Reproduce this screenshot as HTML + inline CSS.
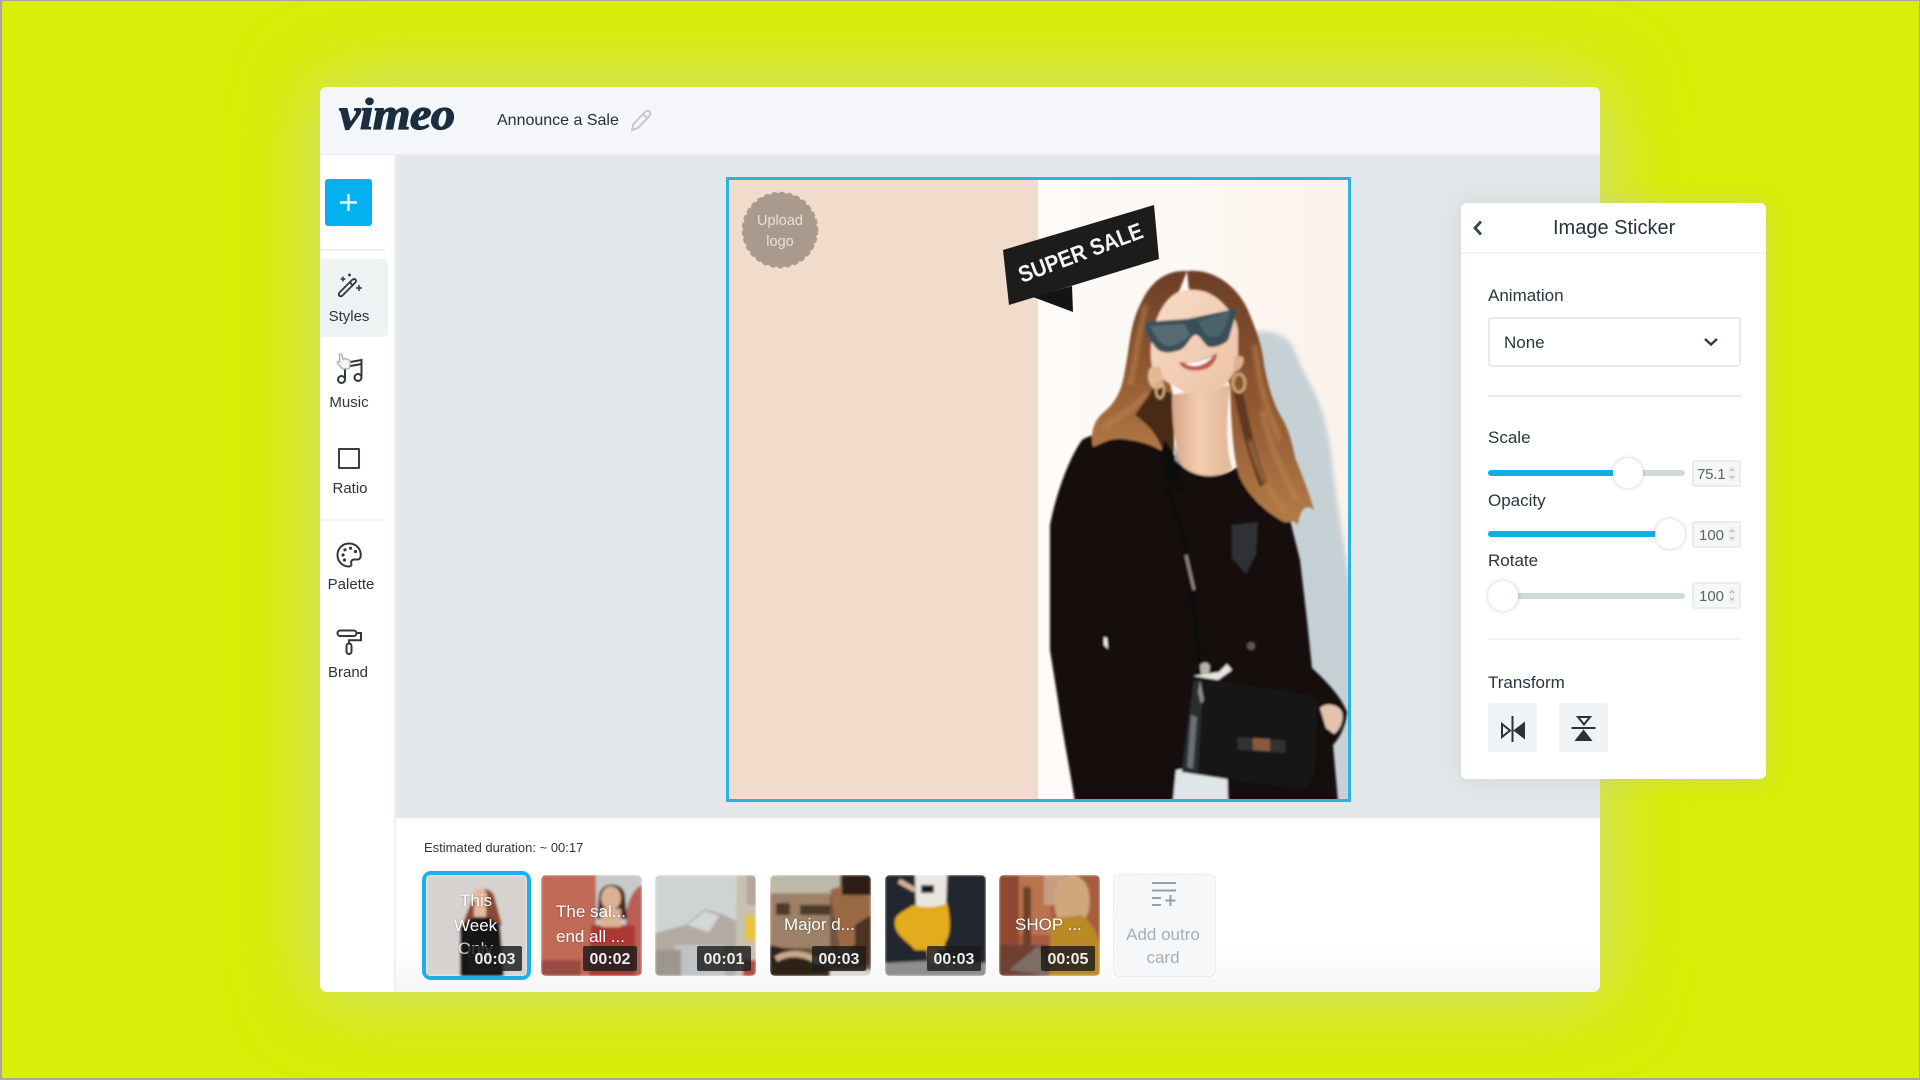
<!DOCTYPE html>
<html><head><meta charset="utf-8"><title>Vimeo</title>
<style>
*{box-sizing:border-box;margin:0;padding:0}
html,body{width:1920px;height:1080px;overflow:hidden}
body{position:relative;background:#d9ee08;font-family:"Liberation Sans",sans-serif;color:#2a3540}
.frame{position:absolute;inset:0;border:2px solid #a8a8a0;border-width:1px 1px 2px 2px;z-index:50;pointer-events:none}
.a{position:absolute}
.win{left:320px;top:87px;width:1280px;height:905px;border-radius:7px;box-shadow:0 0 75px 6px rgba(212,212,200,.62);overflow:hidden;background:#fff}
.side{left:320px;top:155px;width:76px;height:837px;background:#fff;border-right:2px solid #eef0f1}
.stage{left:396px;top:155px;width:1204px;height:663px;background:#e2e8e9}
.bot{left:396px;top:818px;width:1204px;height:174px;background:linear-gradient(#fff 0,#fff 130px,#f6f6f6 174px);border-bottom-right-radius:7px}
.lbl{position:absolute;font-size:15px;line-height:18px;text-align:center;width:76px;color:#2b3640;white-space:nowrap}
.t{position:absolute;white-space:nowrap}
.plab{position:absolute;left:1488px;font-size:17px;line-height:20px;color:#2a3540;white-space:nowrap}
.track{position:absolute;left:1488px;width:197px;height:6px;border-radius:3px;background:#d0d9dc}
.fill{position:absolute;left:0;top:0;height:6px;border-radius:3px;background:#12aee6}
.knob{position:absolute;width:30px;height:30px;border-radius:50%;background:#fff;box-shadow:0 0 4px rgba(0,0,0,.22)}
.num{position:absolute;left:1692px;width:49px;height:27px;background:#f6f8f8;border:2px solid #eaedee;border-radius:3px;font-size:15px;line-height:25px;color:#5a636a;padding-left:3px}
.num svg{position:absolute;right:3px;top:3px}
.btn{position:absolute;top:703px;width:49px;height:49px;background:#f0f3f5;border-radius:3px}
.th{position:absolute;top:875px;width:101px;height:101px;border-radius:5px;overflow:hidden}
.th svg{position:absolute;left:0;top:0}
.cap{position:absolute;color:#fff;font-size:17px;line-height:25px;text-shadow:0 0 2px rgba(0,0,0,.35);white-space:nowrap}
.dur{position:absolute;right:5px;bottom:5px;width:54px;height:25px;background:rgba(28,28,28,.82);border-radius:2px;color:#ececec;font-size:16px;line-height:27px;text-align:center;font-weight:bold}
</style></head>
<body>
<div class="a win"></div>
<div class="a" style="left:320px;top:87px;width:1280px;height:68px;background:#f5f6f9;border-radius:7px 7px 0 0;border-bottom:1px solid #eceef0"></div>
<div class="t" style="left:339px;top:85px;font:italic bold 44px/60px 'Liberation Serif',serif;color:#1a2e3f;-webkit-text-stroke:1.2px #1a2e3f;letter-spacing:-.5px;transform:scaleX(1.1);transform-origin:left center">vimeo</div>
<div class="t" style="left:497px;top:111px;font-size:16px;line-height:20px;color:#26313b">Announce a Sale</div>
<svg class="a" style="left:629px;top:108px" width="24" height="24" viewBox="0 0 24 24" fill="none" stroke="#c3c9cc" stroke-width="2" stroke-linejoin="round"><path d="M3 22l1.500-6L16 4c1.500-1.600 3.300-1.600 4.500-.4s1.200 3-.3 4.500L9 20z"/><path d="M14 6l5 5"/></svg>

<div class="a side" style="border-bottom-left-radius:7px"></div>
<div class="a stage"></div>
<div class="a bot"></div>

<div class="a" style="left:325px;top:179px;width:47px;height:47px;background:#04b0f0;border-radius:3px"></div>
<svg class="a" style="left:325px;top:179px" width="47" height="47"><path d="M23.500 15v17M15 23.500h17" stroke="#e8f8ff" stroke-width="2.400"/></svg>
<div class="a" style="left:320px;top:249px;width:66px;height:2px;background:#eef0f1"></div>
<div class="a" style="left:320px;top:259px;width:68px;height:78px;background:#eff2f3;border-radius:0 5px 5px 0"></div>
<div class="a" style="left:320px;top:519px;width:66px;height:2px;background:#eef0f1"></div>

<svg class="a" style="left:335px;top:272px" width="30" height="30" viewBox="0 0 30 30" fill="none" stroke="#30373d" stroke-width="1.800"><path d="M4.500 20.500L17 8c1.300-1.200 3-1.200 3.600-.4s.5 2.200-.7 3.400L7.500 23.500c-1.200 1-2.600 1-3.200.2s-.6-2.200.2-3.200z"/><path d="M15 10.500l3 3"/><path d="M8 4.500v5M5.500 7h5M14.500 1.500v3M13 3h3M24 13v6M21 16h6" stroke-width="1.500"/></svg>
<div class="lbl" style="left:311px;top:308px">Styles</div>

<svg class="a" style="left:331px;top:350px" width="36" height="36" viewBox="0 0 36 36" fill="none" stroke="#30373d" stroke-width="2"><circle cx="10.500" cy="29.500" r="3.500"/><circle cx="27" cy="27.500" r="3.500"/><path d="M14 29V13l16.500-3v17.500"/><path d="M14 17l16.500-3"/><path d="M8.500 4.500c.8-1 2-.7 2.300.3l1.200 4.200 1.600-.3c2.400 0 5.400 1 5.700 3.200l-.6 5c-.3 1.300-1.300 2-2.500 2h-4.500l-5-5.300c-.8-1-.5-2 .6-2.200l1.300.5z" fill="#f4f4f4" stroke="#a9adb0" stroke-width="1.300"/></svg>
<div class="lbl" style="left:311px;top:394px">Music</div>

<div class="a" style="left:338px;top:448px;width:22px;height:21px;border:2.500px solid #3a4046;border-radius:1px"></div>
<div class="lbl" style="left:312px;top:480px">Ratio</div>

<svg class="a" style="left:335px;top:541px" width="28" height="28" viewBox="0 0 28 28" fill="none" stroke="#30373d" stroke-width="2"><path d="M14 2.500C7.500 2.500 2.500 7.500 2.500 14S7.500 25.500 14 25.500c2 0 2.800-1.300 2.300-2.800-.7-2 .3-4.200 2.700-4.200h3.300c2.300 0 3.500-1.800 3.500-4.300C25.800 7.200 20.500 2.500 14 2.500z"/><g fill="#30373d" stroke="none"><circle cx="8" cy="14" r="1.600"/><circle cx="10" cy="8.800" r="1.600"/><circle cx="15.500" cy="7.200" r="1.600"/><circle cx="20.500" cy="10.500" r="1.600"/><circle cx="9.500" cy="19" r="1.600"/></g></svg>
<div class="lbl" style="left:313px;top:576px">Palette</div>

<svg class="a" style="left:335px;top:628px" width="28" height="28" viewBox="0 0 28 28" fill="none" stroke="#30373d" stroke-width="2"><rect x="2.500" y="2.500" width="19" height="5.500" rx="2.700"/><path d="M21.500 5h4.500v7.200H14v3"/><rect x="11.500" y="15.500" width="5" height="10.500" rx="2.500"/></svg>
<div class="lbl" style="left:310px;top:664px">Brand</div>

<!-- canvas -->
<svg class="a" style="left:726px;top:177px" width="625" height="625" viewBox="726 177 625 625">
<defs>
<linearGradient id="wall" x1="0" x2="1" y1="0" y2="0"><stop offset="0" stop-color="#fdfbf8"/><stop offset=".55" stop-color="#fcf7f2"/><stop offset="1" stop-color="#fbf2ea"/></linearGradient>
<linearGradient id="hr" x1="0" x2="0" y1="0" y2="1"><stop offset="0" stop-color="#6b3f26"/><stop offset=".5" stop-color="#8e5630"/><stop offset="1" stop-color="#b47c48"/></linearGradient>
<linearGradient id="skin" x1="0" x2="1" y1="0" y2="1"><stop offset="0" stop-color="#f8dcc7"/><stop offset="1" stop-color="#ecc2a4"/></linearGradient>
<linearGradient id="nk" x1="0" x2="1" y1="0" y2="0"><stop offset="0" stop-color="#d6a583"/><stop offset=".45" stop-color="#f2cdb2"/><stop offset="1" stop-color="#e2b595"/></linearGradient>
<filter id="b1"><feGaussianBlur stdDeviation="1"/></filter>
<filter id="b3"><feGaussianBlur stdDeviation="2.500"/></filter>
<clipPath id="cc"><rect x="726" y="177" width="625" height="625"/></clipPath>
</defs>
<g clip-path="url(#cc)">
<rect x="726" y="177" width="312" height="625" fill="#f1dccb"/>
<rect x="1038" y="177" width="313" height="625" fill="url(#wall)"/>
<path d="M1253 333C1270 328 1285 335 1292 345C1300 365 1308 380 1316 395C1325 415 1330 440 1333 470C1338 510 1345 550 1351 590L1351 802L1250 802L1240 400Z" fill="#c6d1d6" filter="url(#b3)"/>
<g filter="url(#b1)">
<!-- jacket -->
<path d="M1082 440C1095 432 1120 428 1140 432L1165 442L1182 466C1200 480 1225 478 1240 465L1262 445L1275 490L1290 520L1300 560L1307 620L1312 668C1325 680 1340 695 1347 712C1346 725 1340 738 1333 745L1338 802L1075 802C1070 770 1062 730 1058 700L1050 650L1050 525C1056 495 1068 460 1082 440Z" fill="#170f0d"/>
<path d="M1178 466C1198 482 1226 480 1240 465L1250 520L1240 640L1200 670L1185 600Z" fill="#120e0d"/>
<!-- hair -->
<path d="M1187 271C1215 268 1240 288 1250 315C1256 330 1262 345 1264 365C1268 385 1272 400 1280 415C1290 430 1292 445 1296 460C1302 475 1310 495 1314 510C1305 503 1300 510 1298 525C1292 518 1288 524 1284 522C1265 512 1248 495 1240 478C1234 460 1232 440 1230 385L1190 300Z" fill="url(#hr)"/>
<path d="M1187 271C1165 270 1150 282 1140 305C1130 325 1130 345 1125 370C1122 390 1116 402 1104 412C1094 420 1090 432 1093 447C1105 442 1112 436 1130 440C1145 442 1160 448 1172 458L1174 400L1160 340Z" fill="url(#hr)"/>
<path d="M1135 415C1148 425 1160 435 1166 462L1174 452L1174 395L1155 385Z" fill="#4a2a19"/>
<path d="M1238 390C1244 420 1250 450 1264 485" stroke="#5e3820" stroke-width="9" fill="none"/>
<!-- neck -->
<path d="M1172 395C1172 420 1174 445 1182 466C1198 480 1222 478 1232 468C1226 450 1226 420 1230 385Z" fill="url(#nk)"/>
<path d="M1165 440L1180 464L1184 495L1168 482L1160 455Z" fill="#0e0a09"/>
<path d="M1175 445L1182 466L1175 460Z" fill="#a7a5a0"/>
<!-- face -->
<path d="M1187 290C1201 289 1209 292 1218 299C1232 311 1238 323 1238 331L1238 361C1236 373 1228 383 1220 388C1208 394 1196 396 1187 393C1175 387 1161 379 1153 371C1149 355 1151 341 1154 327C1160 307 1171 291 1187 290Z" fill="url(#skin)"/>
<path d="M1150 368C1146 376 1148 386 1156 390L1164 386L1160 366Z" fill="#e6b797"/>
<path d="M1233 373C1241 370 1245 363 1243 357L1235 355Z" fill="#e0b093"/>
<path d="M1145 322L1187 319L1235 309L1237 310L1229 338C1227 344 1215 348 1209 347C1205 346 1199 333 1195 335C1189 337 1187 349 1177 351C1167 354 1161 352 1157 349C1149 339 1143 329 1145 322Z" fill="#39505a"/>
<path d="M1150 326L1184 324L1190 334C1186 340 1180 344 1170 346C1164 347 1158 342 1150 326Z" fill="#566a73"/>
<path d="M1198 321L1230 312C1228 320 1224 332 1218 336C1212 338 1206 336 1204 332Z" fill="#4d636c"/>
<path d="M1179 362C1191 364 1205 360 1217 353C1217 361 1211 369 1201 370C1189 372 1181 368 1179 362Z" fill="#bd5a48"/>
<path d="M1185 363C1195 363 1205 360 1213 356C1209 362 1201 366 1195 366C1191 366 1187 365 1185 363Z" fill="#fff"/>
<ellipse cx="1239" cy="383" rx="6" ry="9" fill="none" stroke="#c9a46c" stroke-width="3"/>
<ellipse cx="1160" cy="390" rx="4" ry="8" fill="none" stroke="#cfa877" stroke-width="2.500"/>
<!-- clothes detail -->
<path d="M1232 525L1258 522L1256 554L1246 574L1232 558Z" fill="#2d3036"/>
<path d="M1166 487C1175 510 1184 535 1189 560L1200 667" stroke="#0b0909" stroke-width="4" fill="none"/>
<path d="M1186 555L1194 590" stroke="#8d8580" stroke-width="3" fill="none"/>
<path d="M1173 802L1176 770L1227 762L1228 802Z" fill="#dfe6e8"/>
<path d="M1193 676L1219 672L1227 664L1232 670L1218 680Z" fill="#e6e6e2"/>
<path d="M1193 680L1205 678L1310 695C1316 697 1318 702 1317 710L1315 773L1307 790L1245 782L1182 772C1184 740 1188 710 1193 680Z" fill="#131212"/>
<path d="M1194 680L1203 682L1198 773L1182 770Z" fill="#2a2d2e"/>
<path d="M1191 715L1197 717L1193 769L1187 767Z" fill="#6b7074"/>
<path d="M1237 737L1285 740L1286 753L1238 750Z" fill="#333"/>
<path d="M1253 738L1270 739L1270 751L1253 750Z" fill="#8a5a40"/>
<path d="M1200 665C1204 661 1208 662 1210 666L1209 674L1201 675Z" fill="#b8b0a8"/>
<path d="M1200 680L1204 700L1201 704L1198 692Z" fill="#8f8a86"/>
<circle cx="1251" cy="646" r="4" fill="#5e5852"/>
<path d="M1320 708C1326 702 1338 704 1342 712C1344 720 1340 730 1334 734L1326 728Z" fill="#e5c2ad"/>
<path d="M1104 637L1107 638L1108 649L1104 645Z" fill="#f5f5f0"/>
</g>
<path d="M1146 305C1138 335 1136 360 1130 385M1255 345C1258 380 1266 410 1280 440M1262 410C1268 440 1280 470 1298 500M1104 428C1120 415 1135 408 1148 392M1250 440C1258 470 1270 495 1285 512" stroke="#bd8650" stroke-width="4" fill="none" filter="url(#b3)" opacity=".8"/>
<!-- sticker -->
<path d="M1033 297L1073 312L1072 286Z" fill="#141414"/>
<path d="M1003 250L1154 205L1159 259L1009 305Z" fill="#1c1c1c"/>
<text transform="translate(1022,283) rotate(-20.500)" font-family="Liberation Sans,sans-serif" font-weight="bold" font-size="23" fill="#f5f5f5" textLength="131" lengthAdjust="spacingAndGlyphs">SUPER SALE</text>
<!-- logo -->
<circle cx="780" cy="230" r="37" fill="#a99a8d"/>
<circle cx="780" cy="230" r="37.500" fill="none" stroke="#a99a8d" stroke-width="1.500" stroke-dasharray="5 3"/>
<text x="780" y="225" text-anchor="middle" font-family="Liberation Sans,sans-serif" font-size="14.500" fill="#e9dfd6">Upload</text>
<text x="780" y="246" text-anchor="middle" font-family="Liberation Sans,sans-serif" font-size="14.500" fill="#e9dfd6">logo</text>
</g>
<rect x="727.500" y="178.500" width="622" height="622" fill="none" stroke="#29b2e6" stroke-width="3"/>
</svg>

<!-- panel -->
<div class="a" style="left:1461px;top:203px;width:305px;height:576px;background:#fff;border-radius:6px;box-shadow:0 0 22px rgba(190,190,180,.45)"></div>
<div class="a" style="left:1461px;top:252px;width:305px;height:2px;background:#f2f4f5"></div>
<svg class="a" style="left:1471px;top:218px" width="14" height="20" fill="none" stroke="#3a444c" stroke-width="2.800"><path d="M10 3.500L4 10l6 6.500"/></svg>
<div class="t" style="left:1553px;top:215px;font-size:20px;line-height:26px;color:#28333d">Image Sticker</div>
<div class="plab" style="top:286px">Animation</div>
<div class="a" style="left:1488px;top:317px;width:253px;height:50px;border:2px solid #e8ebed;border-radius:3px"></div>
<div class="t" style="left:1504px;top:333px;font-size:17px;line-height:20px;color:#2a3540">None</div>
<svg class="a" style="left:1702px;top:336px" width="18" height="12" fill="none" stroke="#333b42" stroke-width="2.400"><path d="M3 3l6 5.500L15 3"/></svg>
<div class="a" style="left:1488px;top:395px;width:253px;height:2px;background:#e6eaec"></div>

<div class="plab" style="top:428px">Scale</div>
<div class="track" style="top:470px"><div class="fill" style="width:140px"></div></div>
<div class="knob" style="left:1613px;top:458px"></div>
<div class="num" style="top:460px;letter-spacing:-.2px">75.1<svg width="8" height="17" fill="none" stroke="#a9b1b6" stroke-width="1"><rect x=".5" y=".5" width="7" height="16" rx="3.500" fill="#eef1f2" stroke="none"/><path d="M2 6l2-2 2 2M2 11l2 2 2-2"/></svg></div>

<div class="plab" style="top:491px">Opacity</div>
<div class="track" style="top:531px"><div class="fill" style="width:182px"></div></div>
<div class="knob" style="left:1655px;top:519px"></div>
<div class="num" style="top:521px;padding-left:5px">100<svg width="8" height="17" fill="none" stroke="#a9b1b6" stroke-width="1"><rect x=".5" y=".5" width="7" height="16" rx="3.500" fill="#eef1f2" stroke="none"/><path d="M2 6l2-2 2 2M2 11l2 2 2-2"/></svg></div>

<div class="plab" style="top:551px">Rotate</div>
<div class="track" style="top:593px"></div>
<div class="knob" style="left:1488px;top:581px"></div>
<div class="num" style="top:582px;padding-left:5px">100<svg width="8" height="17" fill="none" stroke="#a9b1b6" stroke-width="1"><rect x=".5" y=".5" width="7" height="16" rx="3.500" fill="#eef1f2" stroke="none"/><path d="M2 6l2-2 2 2M2 11l2 2 2-2"/></svg></div>

<div class="a" style="left:1488px;top:638px;width:253px;height:2px;background:#f0f2f3"></div>
<div class="plab" style="top:673px">Transform</div>
<div class="btn" style="left:1488px"><svg width="49" height="49" fill="none" stroke="#2c3338" stroke-width="2"><path d="M24.500 13v26"/><path d="M14 21v13l8-6.500z"/><path d="M36 20.500v14l-9-7z" fill="#2c3338"/></svg></div>
<div class="btn" style="left:1559px"><svg width="49" height="49" fill="none" stroke="#2c3338" stroke-width="2"><path d="M12.500 25h24"/><path d="M19 14h12l-6 7.500z"/><path d="M17.500 37h14l-7-9z" fill="#2c3338"/></svg></div>

<!-- timeline -->
<div class="t" style="left:424px;top:840px;font-size:13px;line-height:16px;color:#2d3740">Estimated duration: ~ 00:17</div>

<div class="a" style="left:422px;top:871px;width:109px;height:109px;border:4px solid #1cb0ea;border-radius:9px"></div>
<div class="th" style="left:426px;border-radius:3px">
<svg width="101" height="101" viewBox="0 0 101 101"><defs><filter id="tb"><feGaussianBlur stdDeviation="1.200"/></filter></defs><g filter="url(#tb)"><rect width="101" height="101" fill="#d7d3d0"/><path d="M36 50l12-30c4-8 16-8 20 0l8 30z" fill="#8c4a30"/><ellipse cx="54" cy="22" rx="7" ry="9" fill="#e4bba0"/><path d="M48 30h12v12H48z" fill="#e4bba0"/><path d="M34 52l14-10 14 0 12 8 4 51H34z" fill="#171313"/></g></svg>
<div class="cap" style="left:34px;top:13px">This</div><div class="cap" style="left:28px;top:38px">Week</div><div class="cap" style="left:32px;top:61px;opacity:.75">Only</div>
<div class="dur">00:03</div></div>

<div class="th" style="left:541px">
<svg width="101" height="101" viewBox="0 0 101 101"><g filter="url(#tb)"><rect width="101" height="101" fill="#c7cacb"/><path d="M0 0h55v101H0z" fill="#c26a58"/><path d="M85 101V40c2-18 10-28 16-30v91z" fill="#b95f56"/><path d="M58 20c2-14 24-14 26 0l2 24H56z" fill="#3d2a22"/><ellipse cx="70" cy="23" rx="10" ry="12" fill="#dcb194"/><path d="M50 50h44v51H48z" fill="#ad3730"/><path d="M60 34h20v18H60z" fill="#dcb194"/><path d="M0 85h40v16H0z" fill="#9a4c42"/></g></svg>
<div class="cap" style="left:15px;top:24px">The sal...</div><div class="cap" style="left:15px;top:49px">end all ...</div>
<div class="dur">00:02</div></div>

<div class="th" style="left:655px">
<svg width="101" height="101" viewBox="0 0 101 101"><g filter="url(#tb)"><rect width="101" height="101" fill="#cfd4d3"/><path d="M0 58l30-8 20-16 16 5 18 8v54H0z" fill="#b3aba1"/><path d="M32 50l18-14 14 5-10 16z" fill="#d4d7d7"/><path d="M20 70h50v31H20z" fill="#bfc3c5"/><path d="M0 75h26v26H0z" fill="#9d968b"/><path d="M82 0h19v101H80z" fill="#c8c0b0"/><path d="M90 40h11v26H90z" fill="#e6c440"/><path d="M92 0h9v30H92z" fill="#b6a59a"/><path d="M88 85h13v16H88z" fill="#b44b3d"/></g></svg>
<div class="dur">00:01</div></div>

<div class="th" style="left:770px">
<svg width="101" height="101" viewBox="0 0 101 101"><g filter="url(#tb)"><rect width="101" height="101" fill="#6f5240"/><path d="M0 0h70v20H0z" fill="#bdb9aa"/><path d="M0 18h60v55H0z" fill="#9d8168"/><path d="M6 28h14v12H6zM30 30h30v10H30z" fill="#4d3a2c"/><path d="M60 15l41-15v55l-30 25z" fill="#9a6a45"/><path d="M72 0h29v20H72z" fill="#2f1e13"/><path d="M0 70l35 8 30 20v3H0z" fill="#2f2019"/><path d="M6 84c14-8 30-6 44 4" stroke="#c8a98c" stroke-width="6" fill="none"/><path d="M60 95h41v6H60z" fill="#d8d8d4"/><path d="M85 50l16-10v50H85z" fill="#4e3120"/></g></svg>
<div class="cap" style="left:14px;top:37px">Major d...</div>
<div class="dur">00:03</div></div>

<div class="th" style="left:885px">
<svg width="101" height="101" viewBox="0 0 101 101"><g filter="url(#tb)"><rect width="101" height="101" fill="#24272f"/><path d="M0 88l40-2 61 2v13H0z" fill="#8e8f8c"/><path d="M30 0h32l-1 32H31z" fill="#e9e7e0"/><path d="M14 6l16 9" stroke="#d5b49a" stroke-width="5"/><rect x="36" y="10" width="13" height="8" fill="#15181e"/><path d="M28 30C38 33 52 33 62 28C66 45 66 60 60 68L60 75L30 75C22 65 8 60 10 45C12 38 20 36 28 30Z" fill="#e3ac1e"/><path d="M42 75h10l2 14H44z" fill="#d8c8b0"/></g></svg>
<div class="dur">00:03</div></div>

<div class="th" style="left:999px">
<svg width="101" height="101" viewBox="0 0 101 101"><g filter="url(#tb)"><rect width="101" height="101" fill="#a75c3e"/><path d="M0 0h20v101H0z" fill="#8f4a33"/><path d="M20 0h32v60H20z" fill="#b97350"/><path d="M24 12h8v70h-8z" fill="#6e3f2c"/><path d="M45 0h20v30H45z" fill="#c69d84"/><path d="M58 10c6-16 30-12 32 8 2 14 0 24-8 28H60c-6-10-6-26-2-36z" fill="#cfa77c"/><path d="M52 44l30-4c10 6 19 20 19 36v25H50z" fill="#b98a28"/><path d="M0 70h50v31H0z" fill="#6e4032"/><path d="M10 95l30-25 10 31z" fill="#7c6e63"/></g></svg>
<div class="cap" style="left:16px;top:37px">SHOP ...</div>
<div class="dur">00:05</div></div>

<div class="a" style="left:1113px;top:874px;width:103px;height:103px;background:#f5f7f9;border:1.500px dashed #e4e8ea;border-radius:6px"></div>
<svg class="a" style="left:1150px;top:880px" width="30" height="30" fill="none" stroke="#8fa1ab" stroke-width="2"><path d="M2 3h24M2 10.500h24M2 18h9M2 25h9M15.500 20.500h10M20.500 15v11"/></svg>
<div class="t" style="left:1113px;top:923px;width:100px;text-align:center;font-size:17px;line-height:23px;color:#a5afb5;white-space:normal">Add outro card</div>
<div class="frame"></div>
</body></html>
